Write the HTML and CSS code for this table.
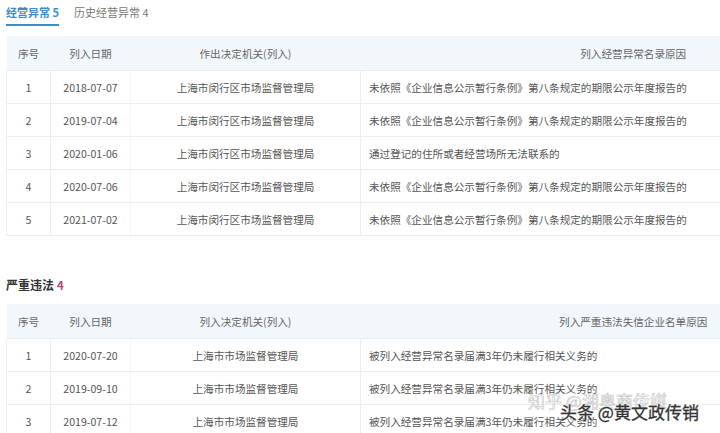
FILE: index.html
```html
<!DOCTYPE html>
<html lang="zh-CN">
<head>
    <meta charset="UTF-8">
    <meta name="viewport" content="width=device-width, initial-scale=1.0">
    <title>经营异常</title>
    <link rel="stylesheet" href="styles.css">
</head>
<body>
    <div class="page">
        <div class="tabs">
            <div class="tab active">经营异常 5</div>
            <div class="tab">历史经营异常 4</div>
        </div>

        <!-- 经营异常 -->
        <table class="grid">
            <colgroup>
                <col class="c-no"><col class="c-date"><col class="c-org"><col class="c-reason">
            </colgroup>
            <thead>
                <tr><th>序号</th><th>列入日期</th><th>作出决定机关(列入)</th><th class="reason-head">列入经营异常名录原因</th></tr>
            </thead>
            <tbody>
                <tr><td>1</td><td>2018-07-07</td><td class="org">上海市闵行区市场监督管理局</td><td class="reason">未依照《企业信息公示暂行条例》第八条规定的期限公示年度报告的</td></tr>
                <tr><td>2</td><td>2019-07-04</td><td class="org">上海市闵行区市场监督管理局</td><td class="reason">未依照《企业信息公示暂行条例》第八条规定的期限公示年度报告的</td></tr>
                <tr><td>3</td><td>2020-01-06</td><td class="org">上海市闵行区市场监督管理局</td><td class="reason">通过登记的住所或者经营场所无法联系的</td></tr>
                <tr><td>4</td><td>2020-07-06</td><td class="org">上海市闵行区市场监督管理局</td><td class="reason">未依照《企业信息公示暂行条例》第八条规定的期限公示年度报告的</td></tr>
                <tr><td>5</td><td>2021-07-02</td><td class="org">上海市闵行区市场监督管理局</td><td class="reason">未依照《企业信息公示暂行条例》第八条规定的期限公示年度报告的</td></tr>
            </tbody>
        </table>

        <h2 class="section-title">严重违法 <span class="count">4</span></h2>

        <!-- 严重违法 -->
        <table class="grid">
            <colgroup>
                <col class="c-no"><col class="c-date"><col class="c-org"><col class="c-reason">
            </colgroup>
            <thead>
                <tr><th>序号</th><th>列入日期</th><th>列入决定机关(列入)</th><th class="reason-head">列入严重违法失信企业名单原因</th></tr>
            </thead>
            <tbody>
                <tr><td>1</td><td>2020-07-20</td><td class="org">上海市市场监督管理局</td><td class="reason">被列入经营异常名录届满3年仍未履行相关义务的</td></tr>
                <tr><td>2</td><td>2019-09-10</td><td class="org">上海市市场监督管理局</td><td class="reason">被列入经营异常名录届满3年仍未履行相关义务的</td></tr>
                <tr><td>3</td><td>2019-07-12</td><td class="org">上海市市场监督管理局</td><td class="reason">被列入经营异常名录届满3年仍未履行相关义务的</td></tr>
            </tbody>
        </table>
    </div>

    <div class="mark mark-zhihu">知乎 @湘奥商传媒</div>
    <div class="mark mark-toutiao">头条 @黄文政传销</div>
</body>
</html>
```

FILE: styles.css
```css
body {
    margin: 0;
    font-family: "Noto Sans CJK SC", "Noto Sans", sans-serif;
    color: #555;
    background-color: white;
    overflow: hidden;
}
.page {
    padding-left: 6px;
}
.tabs {
    display: flex;
    gap: 15px;
    height: 26px;
}
.tab {
    font-size: 11px;
    line-height: 24px;
    height: 24px;
    color: #777;
}
.tab.active {
    color: #3f8cc4;
    font-weight: bold;
    border-bottom: 2px solid #3f8cc4;
}
.grid {
    width: 714px;
    border-collapse: collapse;
    table-layout: fixed;
    font-size: 10.6px;
    margin-top: 10px;
}
.c-no { width: 44px; }
.c-date { width: 80px; }
.c-org { width: 230px; }
.grid th {
    height: 34px;
    padding: 0;
    font-weight: normal;
    color: #666;
    background-color: #f2f7fb;
    text-align: center;
    white-space: nowrap;
}
.grid th.reason-head {
    padding-left: 186px;
}
.grid td {
    height: 32px;
    padding: 0;
    text-align: center;
    border-top: 1px solid #ececec;
    border-left: 1px solid #f5f5f5;
    color: #555;
    white-space: nowrap;
}
.grid td:first-child {
    border-left: 1px solid #f0f0f0;
}
.grid td:nth-child(2),
.grid td:nth-child(4) {
    border-left-color: #ededed;
}
.grid tbody tr:last-child td {
    border-bottom: 1px solid #ececec;
}
.grid td.reason {
    text-align: left;
    padding-left: 8px;
}
.section-title {
    margin: 40px 0 0;
    font-size: 12px;
    line-height: 18px;
    color: #333;
}
.section-title .count {
    color: #c24a6e;
}
.mark {
    position: absolute;
    white-space: nowrap;
}
.mark-zhihu {
    left: 528px;
    top: 388px;
    font-size: 17px;
    color: rgba(255, 255, 255, 0.6);
    -webkit-text-stroke: 0.6px #c4c4c4;
}
.mark-toutiao {
    left: 560px;
    top: 399px;
    font-size: 17px;
    color: #333;
    -webkit-text-stroke: 0.3px #333;
    text-shadow: 0 0 2px #fff, 0 0 2px #fff;
}
```
